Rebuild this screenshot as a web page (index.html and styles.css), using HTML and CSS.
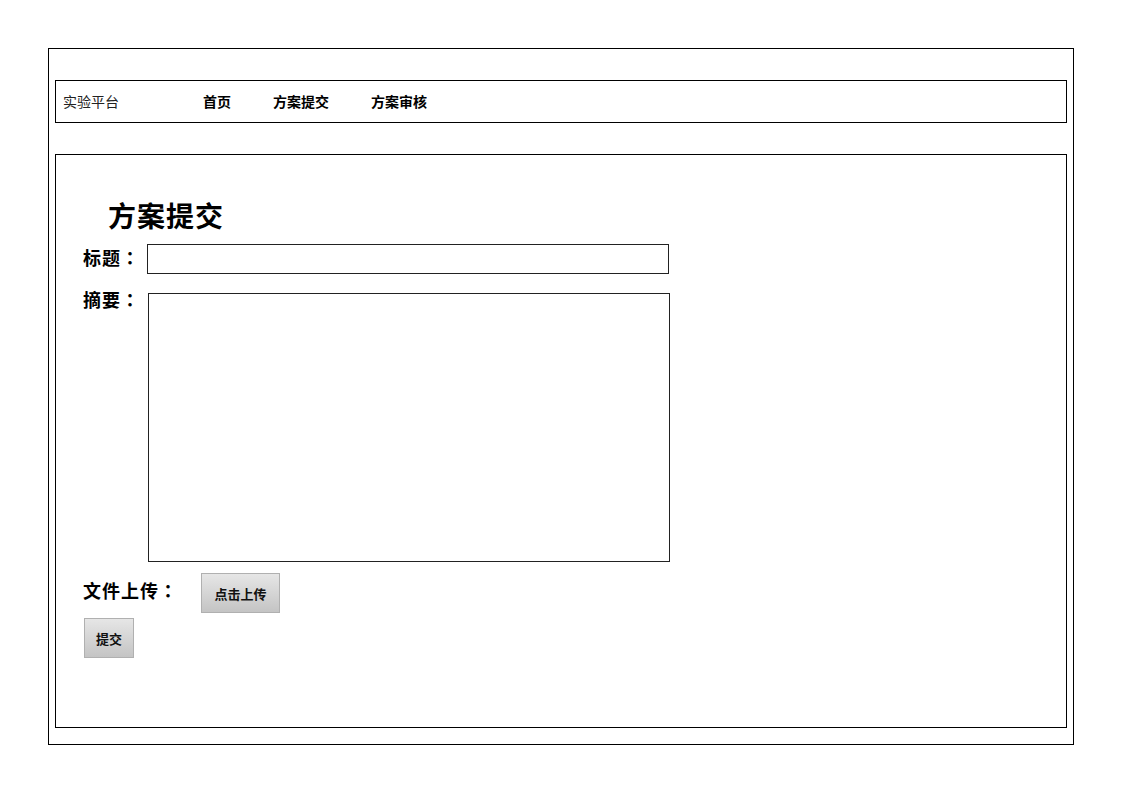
FILE: index.html
```html
<!DOCTYPE html>
<html lang="zh">
<head>
    <meta charset="UTF-8">
    <title>方案提交</title>
    <link rel="stylesheet" href="styles.css">
</head>
<body>
    <div class="page">
        <div class="nav">
            <span class="brand">实验平台</span>
            <a class="nav-link" href="#">首页</a>
            <a class="nav-link" href="#">方案提交</a>
            <a class="nav-link" href="#">方案审核</a>
        </div>

        <div class="content">
            <h1 class="title">方案提交</h1>
            <div class="row">
                <label class="label" lang="zh-TW">标题：</label>
                <input class="input" type="text">
            </div>
            <div class="row row-top">
                <label class="label" lang="zh-TW">摘要：</label>
                <textarea class="textarea"></textarea>
            </div>
            <div class="row upload-row">
                <label class="label" lang="zh-TW">文件上传：</label>
                <button class="btn upload-btn">点击上传</button>
            </div>
            <button class="btn submit-btn">提交</button>
        </div>
    </div>
</body>
</html>
```

FILE: styles.css
```css
* { box-sizing: border-box; }
body { margin: 0; padding: 48px 0 0 48px; background: #fff; color: #000; font-family: "Noto Sans CJK SC", sans-serif; }

.page { width: 1026px; height: 697px; border: 1px solid #000; padding: 31px 6px 0 6px; }

.nav { height: 43px; border: 1px solid #000; display: flex; align-items: center; padding: 0 0 2px 7px; }
.brand { font-family: "Liberation Serif", "Noto Sans CJK SC", serif; font-size: 14px; width: 140px; color: #222; }
.nav-link { font-size: 14px; font-weight: bold; color: #000; text-decoration: none; margin-right: 42px; }

.content { margin-top: 31px; height: 574px; border: 1px solid #000; padding: 44px 27px 0 27px; }
.title { margin: 0 0 0 25px; font-size: 28px; font-weight: bold; letter-spacing: 1px; line-height: 33px; height: 45px; }

.row { display: flex; align-items: center; margin-bottom: 19px; }
.row-top { align-items: flex-start; margin-bottom: 11px; }
.label { font-family: "Noto Sans CJK TC", "Noto Sans CJK SC", sans-serif; font-size: 18px; font-weight: bold; letter-spacing: 1px; width: 64px; line-height: 26px; padding-bottom: 4px; white-space: nowrap; }
.row-top .label { margin-top: -7px; }
.upload-row { margin-bottom: 5px; }
.upload-row .label { width: 118px; padding-bottom: 6px; }

.input { width: 522px; height: 30px; border: 1px solid #222; padding: 2px 4px; font-size: 14px; }
.textarea { width: 522px; height: 269px; border: 1px solid #222; margin-left: 1px; resize: none; font-size: 14px; }

.btn { height: 40px; padding: 0 11px; border: 1px solid #b0b0b0; background: linear-gradient(#e6e6e6, #c4c4c4); font-family: "Noto Sans CJK SC", sans-serif; font-size: 13px; font-weight: bold; color: #111; cursor: pointer; }
.upload-btn { width: 79px; }
.submit-btn { width: 50px; padding: 0; margin-left: 1px; }
```
